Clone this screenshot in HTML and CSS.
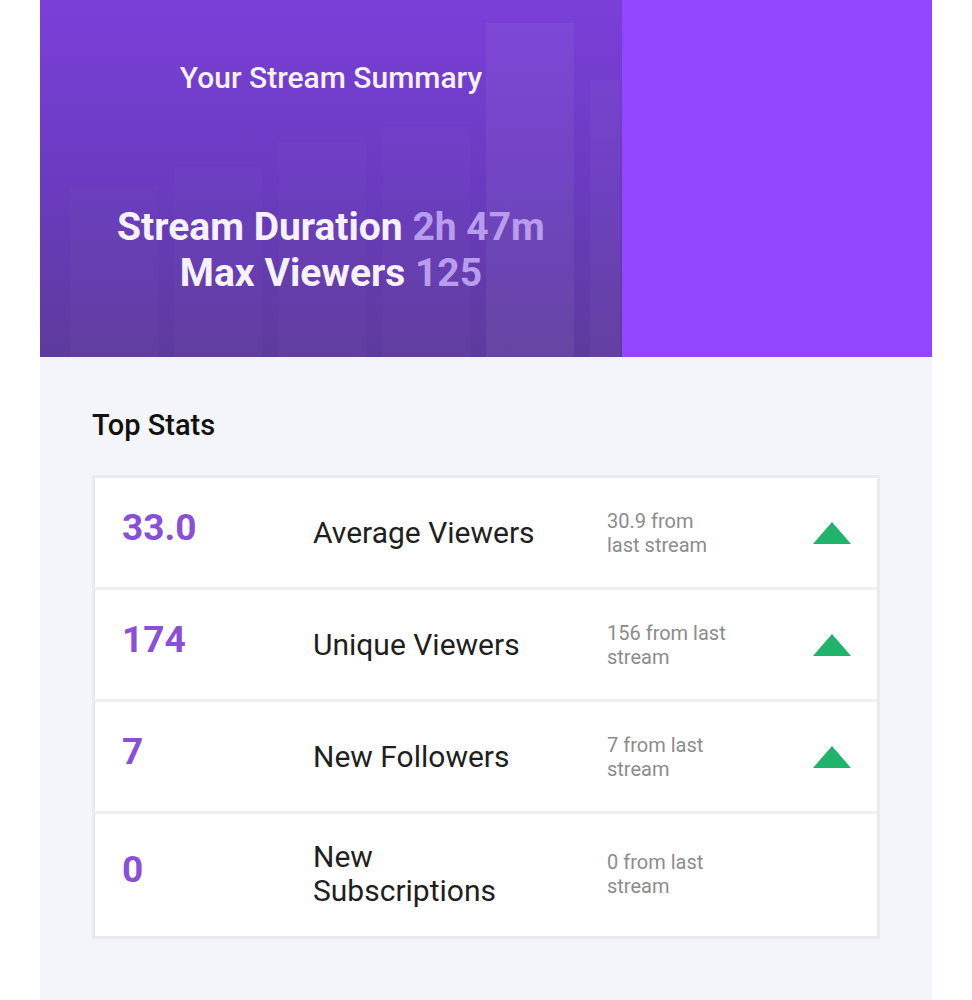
FILE: index.html
```html
<!DOCTYPE html>
<html lang="en">

<head>
  <meta charset="UTF-8" />
  <meta name="viewport" content="width=device-width, initial-scale=1.0" />
  <title>Stream Summary</title>
  <link rel="stylesheet" href="styles.css">
</head>

<body>
  <div class="page">
    <header class="hero">
      <div class="hero-art">
        <div class="bars">
          <span class="bar" style="height: 170px"></span>
          <span class="bar" style="height: 190px"></span>
          <span class="bar" style="height: 215px"></span>
          <span class="bar" style="height: 230px"></span>
          <span class="bar bar-hi" style="height: 334px"></span>
          <span class="bar bar-thin" style="height: 277px"></span>
        </div>
        <h1>Your Stream Summary</h1>
        <p class="hero-stats">
          Stream Duration <span>2h 47m</span><br>
          Max Viewers <span>125</span>
        </p>
      </div>
      <div class="hero-side"></div>
    </header>

    <main class="summary">
      <h2>Top Stats</h2>

      <div class="stats">
        <div class="stat-row">
          <div class="stat-num">33.0</div>
          <div class="stat-label">Average Viewers</div>
          <div class="stat-delta">30.9 from last stream</div>
          <div class="stat-trend up"></div>
        </div>
        <div class="stat-row">
          <div class="stat-num">174</div>
          <div class="stat-label">Unique Viewers</div>
          <div class="stat-delta">156 from last stream</div>
          <div class="stat-trend up"></div>
        </div>
        <div class="stat-row">
          <div class="stat-num">7</div>
          <div class="stat-label">New Followers</div>
          <div class="stat-delta">7 from last stream</div>
          <div class="stat-trend up"></div>
        </div>
        <div class="stat-row">
          <div class="stat-num">0</div>
          <div class="stat-label">New Subscriptions</div>
          <div class="stat-delta">0 from last stream</div>
          <div class="stat-trend"></div>
        </div>
      </div>
    </main>
  </div>
</body>

</html>
```

FILE: styles.css
```css
* {
  margin: 0;
  padding: 0;
  box-sizing: border-box;
}

body {
  font-family: Roboto, 'Liberation Sans', sans-serif;
  background: #fff;
  color: #1f1f1f;
}

.page {
  width: 892px;
  margin: 0 auto;
}

/* header */
.hero {
  display: flex;
  height: 357px;
}

.hero-art {
  position: relative;
  flex: 1;
  background: linear-gradient(180deg, #7a3fd8 0%, #6a3bc0 50%, #5d3b9d 100%);
  color: #f6f2fd;
  text-align: center;
  overflow: hidden;
}

.hero-side {
  flex: 0 0 310px;
  background: #9147ff;
}

.bars {
  position: absolute;
  left: 30px;
  right: 0;
  bottom: 0;
  display: flex;
  align-items: flex-end;
  gap: 16px;
}

.bar {
  width: 88px;
  background: rgba(255, 255, 255, 0.018);
}

.bar-hi {
  background: rgba(255, 255, 255, 0.05);
}

.bar-thin {
  width: 30px;
  background: rgba(255, 255, 255, 0.03);
}

.hero h1 {
  position: relative;
  margin-top: 59px;
  font-size: 30px;
  line-height: 38px;
  font-weight: 500;
}

.hero-stats {
  position: relative;
  margin-top: 107px;
  font-size: 39px;
  line-height: 46px;
  font-weight: 700;
}

.hero-stats span {
  color: #b89ded;
}

/* stats */
.summary {
  background: #f4f5fa;
  padding: 50px 52px 70px;
}

.summary h2 {
  font-size: 29px;
  line-height: 36px;
  font-weight: 500;
  color: #111;
}

.stats {
  margin-top: 32px;
  border: 3px solid #ebebee;
  background: #fff;
}

.stat-row {
  display: grid;
  grid-template-columns: 191px 294px 206px 38px;
  align-items: center;
  min-height: 112px;
  padding: 26px 0 26px 27px;
  border-bottom: 3px solid #efeff1;
}

.stat-row:last-child {
  padding-bottom: 28px;
  border-bottom: none;
}

.stat-num {
  margin-bottom: 10px;
  font-size: 37px;
  font-weight: 700;
  color: #8a4fd9;
}

.stat-label {
  width: 236px;
  font-size: 30px;
  line-height: 34px;
  color: #1f1f1f;
}

.stat-delta {
  width: 122px;
  font-size: 20px;
  line-height: 24px;
  color: #8c8c8c;
}

.stat-trend.up {
  width: 0;
  height: 0;
  border-left: 19px solid transparent;
  border-right: 19px solid transparent;
  border-bottom: 22px solid #1fb36b;
}
```
